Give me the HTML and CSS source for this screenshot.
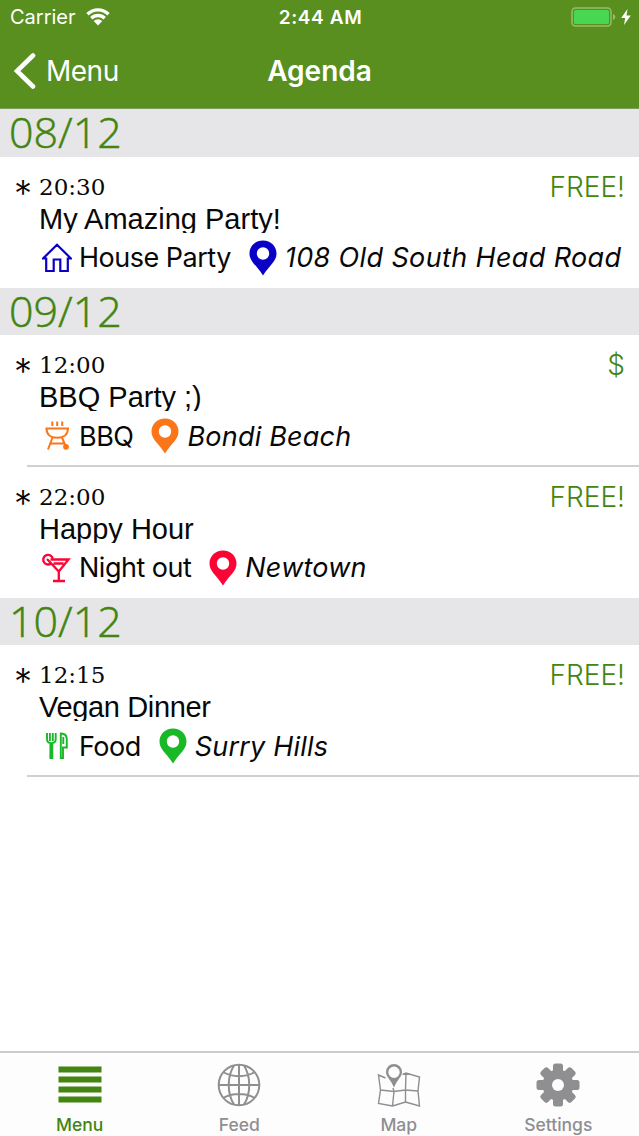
FILE: index.html
```html
<!DOCTYPE html>
<html lang="en">
<head>
    <meta charset="UTF-8">
    <meta name="viewport" content="width=device-width, initial-scale=1.0">
    <title>Agenda</title>
    <link rel="stylesheet" href="styles.css">
</head>
<body>
    <!-- shared icons -->
    <svg class="symbols" aria-hidden="true">
        <symbol id="pin" viewBox="0 0 28 36">
            <path fill="currentColor" fill-rule="evenodd" d="M14 .5C6.200 .5 .5 6.300 .5 13.500C.5 21.500 7 24.500 14 35.500C21 24.500 27.500 21.500 27.500 13.500C27.500 6.300 21.800 .5 14 .5ZM14 7.300a6.200 6.200 0 1 1 0 12.400a6.200 6.200 0 1 1 0-12.400Z"/>
        </symbol>
    </svg>

    <div class="app">
        <header>
            <div class="status-bar">
                <div class="carrier">
                    <span class="carrier-name">Carrier</span>
                    <svg class="wifi" viewBox="0 0 24 18">
                        <path d="M1.500 6.200a15 15 0 0 1 21 0M5.300 10.200a9.600 9.600 0 0 1 13.400 0" fill="none" stroke="#fff" stroke-width="3.400"/>
                        <path d="M12 17.500l-4.300-4.400a6.200 6.200 0 0 1 8.600 0z" fill="#fff"/>
                    </svg>
                </div>
                <span class="clock">2:44 AM</span>
                <div class="power">
                    <svg class="battery" viewBox="0 0 46 20">
                        <rect x="1" y="1" width="39" height="18" rx="3.500" fill="none" stroke="#98bf68" stroke-width="1.500"/>
                        <rect x="3" y="3" width="35" height="14" rx="1.500" fill="#48d751"/>
                        <path d="M42 7c3 1 3 5 0 6z" fill="#98bf68"/>
                    </svg>
                    <svg class="bolt" viewBox="0 0 10 16">
                        <path d="M6.500 0L.2 9h4L3 16l6.800-9.500H5.500z" fill="#fff"/>
                    </svg>
                </div>
            </div>
            <div class="nav-bar">
                <div class="back">
                    <svg class="chevron" viewBox="0 0 22 36">
                        <path d="M19 2.500L3 18l16 15.500" fill="none" stroke="#fff" stroke-width="4.600" stroke-linecap="round"/>
                    </svg>
                    <span class="back-label">Menu</span>
                </div>
                <h1>Agenda</h1>
            </div>
        </header>

        <main>
            <h2>08/12</h2>
            <div class="event">
                <span class="star">*</span>
                <div class="info">
                    <div class="top"><span class="time">20:30</span><span class="price">FREE!</span></div>
                    <div class="title">My Amazing Party!</div>
                    <div class="details house">
                        <svg class="type-icon" viewBox="0 0 30 30">
                            <path d="M1 15.500L15 1.800L29 15.500H25.800V28H18.300V16.500H11.700V28H4.200V15.500Z" fill="none" stroke="currentColor" stroke-width="2.200"/>
                        </svg>
                        <span class="type">House Party</span>
                        <svg class="pin"><use href="#pin"/></svg>
                        <span class="place address">108 Old South Head Road</span>
                    </div>
                </div>
            </div>

            <h2>09/12</h2>
            <div class="event divided">
                <span class="star">*</span>
                <div class="info">
                    <div class="top"><span class="time">12:00</span><span class="price">$</span></div>
                    <div class="title">BBQ Party ;)</div>
                    <div class="details bbq">
                        <svg class="type-icon" viewBox="0 0 30 30">
                            <g fill="none" stroke="currentColor" stroke-width="2">
                                <path d="M10.300 .5v4.500M15.200 .5v4.500M20.200 .5v4.500M3.500 7.500h23.500M4.500 7.500c0 6 4.300 9.300 10.700 9.300s10.700-3.300 10.700-9.300M10.500 16.500L6 28.500M20 16.500L23.500 25M8.500 22.500h14"/>
                            </g>
                            <circle cx="24" cy="25.800" r="2.900" fill="currentColor"/>
                        </svg>
                        <span class="type">BBQ</span>
                        <svg class="pin"><use href="#pin"/></svg>
                        <span class="place">Bondi Beach</span>
                    </div>
                </div>
            </div>
            <div class="event">
                <span class="star">*</span>
                <div class="info">
                    <div class="top"><span class="time">22:00</span><span class="price">FREE!</span></div>
                    <div class="title">Happy Hour</div>
                    <div class="details night">
                        <svg class="type-icon" viewBox="0 0 30 30">
                            <g fill="none" stroke="currentColor" stroke-width="2.300">
                                <path d="M8.500 6.500H26.500L16.800 18.500L5 6M11.500 10.500H21.500M16.800 18.500v9.500M11 28h12"/>
                                <path d="M10.800 5.800A4.800 4.800 0 1 0 9 10.500"/>
                            </g>
                        </svg>
                        <span class="type">Night out</span>
                        <svg class="pin"><use href="#pin"/></svg>
                        <span class="place">Newtown</span>
                    </div>
                </div>
            </div>

            <h2>10/12</h2>
            <div class="event divided">
                <span class="star">*</span>
                <div class="info">
                    <div class="top"><span class="time">12:15</span><span class="price">FREE!</span></div>
                    <div class="title title-vegan">Vegan Dinner</div>
                    <div class="details food">
                        <svg class="type-icon" viewBox="0 0 30 30">
                            <g fill="none" stroke="currentColor" stroke-width="1.900">
                                <path d="M5 2v6c0 2.500 1.200 3.800 3.400 4V27h1.900V12c2.200-.2 3.400-1.500 3.400-4V2M7.900 2v8M10.800 2v8"/>
                                <path d="M18.800 2.500V27H21V16.500H24.800V8C24.800 4.500 22.500 2.500 18.800 2.500zM21.300 6v7"/>
                            </g>
                        </svg>
                        <span class="type">Food</span>
                        <svg class="pin"><use href="#pin"/></svg>
                        <span class="place">Surry Hills</span>
                    </div>
                </div>
            </div>
        </main>

        <nav class="tab-bar">
            <div class="tab active">
                <svg class="tab-icon" viewBox="0 0 44 44">
                    <path d="M.5 6.500h43M.5 16.500h43M.5 26.500h43M.5 36.500h43" stroke="currentColor" stroke-width="6"/>
                </svg>
                <span>Menu</span>
            </div>
            <div class="tab">
                <svg class="tab-icon" viewBox="0 0 44 44">
                    <g fill="none" stroke="currentColor" stroke-width="2">
                        <circle cx="22" cy="22" r="20.300"/>
                        <path d="M1.500 22h41M22 1.500v41M6 9c9 5.500 23 5.500 32 0M6 35c9-5.500 23-5.500 32 0M17 2.500c-7 11-7 28 0 39M27 2.500c7 11 7 28 0 39"/>
                    </g>
                </svg>
                <span>Feed</span>
            </div>
            <div class="tab">
                <svg class="tab-icon" viewBox="0 0 44 44">
                    <path d="M8.500 15L1.500 12L3.500 27L1.500 40.500L15.500 43L28.500 39L42.500 43L41 28L42.500 14L29 10L25.500 11.500M3.500 27L17 28.500L28.500 27L41 28M15.500 43L17 28.500L16 25M28.500 39V27L29 10" fill="none" stroke="currentColor" stroke-width="1.400"/>
                    <path d="M17 1a8 8 0 0 0-8 8c0 5 5 8 8 15.500c3-7.500 8-10.500 8-15.500a8 8 0 0 0-8-8zm0 2.500a5.700 5.700 0 1 1 0 11.400a5.700 5.700 0 1 1 0-11.400z" fill="currentColor" fill-rule="evenodd"/>
                </svg>
                <span>Map</span>
            </div>
            <div class="tab">
                <svg class="tab-icon" viewBox="0 0 44 44">
                    <g fill="currentColor">
                        <rect x="17" y=".5" width="10" height="43" rx="2.500"/>
                        <rect x="17" y=".5" width="10" height="43" rx="2.500" transform="rotate(45 22 22)"/>
                        <rect x="17" y=".5" width="10" height="43" rx="2.500" transform="rotate(90 22 22)"/>
                        <rect x="17" y=".5" width="10" height="43" rx="2.500" transform="rotate(135 22 22)"/>
                        <circle cx="22" cy="22" r="15.500"/>
                    </g>
                    <circle cx="22" cy="22" r="6" fill="#fdfdfd"/>
                </svg>
                <span>Settings</span>
            </div>
        </nav>
    </div>
</body>
</html>
```
FILE: styles.css
```css
* {
    box-sizing: border-box;
}
body {
    margin: 0;
    font-family: Inter, "Liberation Sans", sans-serif;
    color: #080808;
    background: #fff;
}
svg {
    display: block;
    flex-shrink: 0;
}
.symbols {
    display: none;
}
.app {
    display: flex;
    flex-direction: column;
    width: 639px;
    height: 1136px;
    overflow: hidden;
}

/* header */
header {
    height: 109px;
    background: #588f1f;
    border-bottom: 1px solid #7d9a5f;
    color: #fff;
}
.status-bar {
    display: grid;
    grid-template-columns: 1fr auto 1fr;
    align-items: center;
    height: 34px;
    padding: 0 8px 0 10px;
    font-size: 19px;
}
.carrier {
    display: flex;
    align-items: center;
    gap: 10px;
}
.carrier-name {
    font-size: 20px;
}
.wifi {
    width: 24px;
    height: 18px;
}
.clock {
    font-weight: 600;
    letter-spacing: 0.6px;
}
.power {
    display: flex;
    align-items: center;
    justify-content: flex-end;
    gap: 4px;
}
.battery {
    width: 46px;
    height: 20px;
}
.bolt {
    width: 10px;
    height: 16px;
}
.nav-bar {
    display: grid;
    grid-template-columns: 1fr auto 1fr;
    align-items: center;
    height: 74px;
    padding: 0 14px;
}
.back {
    display: flex;
    align-items: center;
    gap: 10px;
}
.chevron {
    width: 22px;
    height: 36px;
}
.back-label {
    font-size: 28px;
    letter-spacing: -0.5px;
}
h1 {
    margin: 0;
    font-size: 28px;
    font-weight: 600;
}

/* agenda list */
main {
    flex: 1;
}
h2 {
    height: 47.500px;
    margin: 0;
    padding-left: 9px;
    background: #e6e5e7;
    color: #438510;
    font-family: "Open Sans", sans-serif;
    font-size: 43px;
    font-weight: 300;
    line-height: 46px;
    -webkit-text-stroke: 0.5px #438510;
}
.event {
    display: flex;
    height: 131.300px;
    padding: 15px 14px 0 14px;
}
.divided {
    background: linear-gradient(#d0d0d2, #d0d0d2) 27px 100% / 100% 2px no-repeat;
}
.star {
    width: 25px;
    font-size: 36px;
    font-weight: 300;
    line-height: 42px;
}
.info {
    flex: 1;
}
.top {
    display: flex;
    justify-content: space-between;
    height: 29px;
    line-height: 30px;
}
.time {
    font-family: "DejaVu Serif", serif;
    font-size: 23px;
}
.price {
    color: #438510;
    font-size: 28px;
    font-weight: 300;
}
.title {
    height: 32px;
    overflow: hidden;
    font-family: "Liberation Sans", Arial, sans-serif;
    font-size: 29px;
    line-height: 36px;
}
.title-vegan {
    letter-spacing: -0.35px;
}
.details {
    display: flex;
    align-items: center;
    height: 50px;
    padding-left: 3px;
    font-size: 27px;
    white-space: nowrap;
}
.type-icon {
    width: 30px;
    height: 30px;
    margin-right: 7px;
}
.pin {
    width: 28px;
    height: 36px;
    margin: 0 8px 0 18px;
}
.type,
.place {
    color: #080808;
}
.type {
    letter-spacing: -0.5px;
}
.place {
    font-style: italic;
    letter-spacing: 0.2px;
}
.address {
    letter-spacing: 0.37px;
}
.house {
    color: #0b00c5;
}
.bbq {
    color: #fb7619;
}
.night {
    color: #fb0536;
}
.food {
    color: #19b826;
}

/* tab bar */
.tab-bar {
    display: grid;
    grid-template-columns: repeat(4, 1fr);
    height: 85px;
    padding: 10px 1px 0 0;
    border-top: 2px solid #ccccce;
    background: #fdfdfd;
    color: #8f8e91;
}
.tab {
    display: flex;
    flex-direction: column;
    align-items: center;
    font-size: 17.500px;
    font-weight: 500;
    line-height: 23px;
}
.tab-icon {
    width: 44px;
    height: 44px;
    margin-bottom: 6px;
}
.active {
    color: #438510;
}
```
